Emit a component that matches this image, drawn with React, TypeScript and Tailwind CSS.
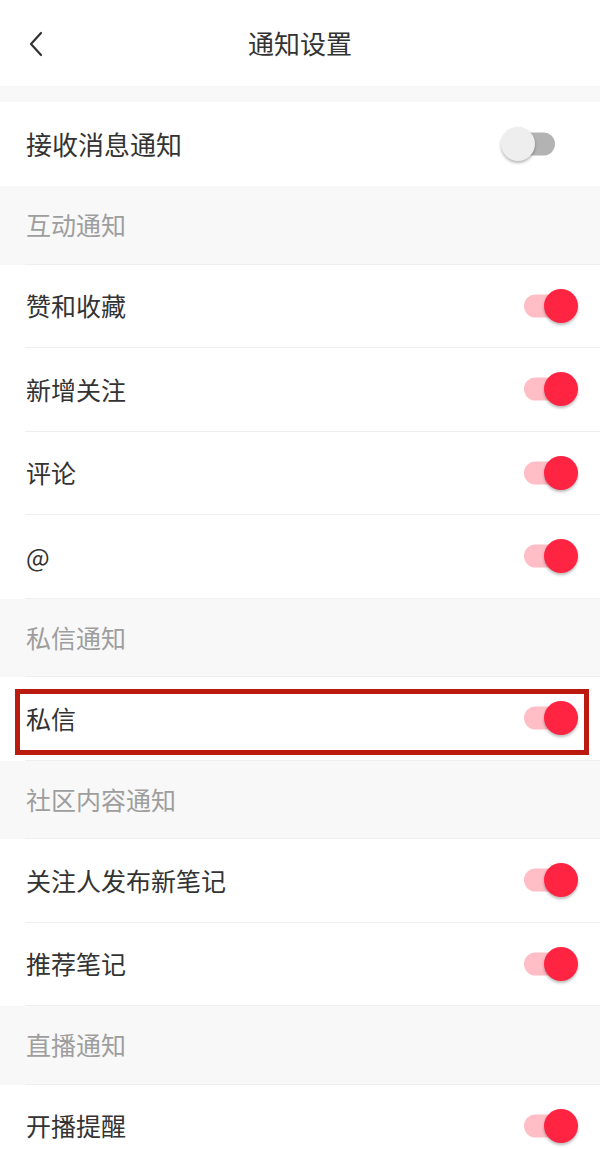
import { useState } from "react";

type Item =
  | { kind: "section"; label: string }
  | { kind: "row"; key: string; label: string; boxed?: boolean };

const ITEMS: Item[] = [
  { kind: "section", label: "互动通知" },
  { kind: "row", key: "like", label: "赞和收藏" },
  { kind: "row", key: "follow", label: "新增关注" },
  { kind: "row", key: "comment", label: "评论" },
  { kind: "row", key: "at", label: "@" },
  { kind: "section", label: "私信通知" },
  { kind: "row", key: "dm", label: "私信", boxed: true },
  { kind: "section", label: "社区内容通知" },
  { kind: "row", key: "notes", label: "关注人发布新笔记" },
  { kind: "row", key: "recommend", label: "推荐笔记" },
  { kind: "section", label: "直播通知" },
  { kind: "row", key: "live", label: "开播提醒" },
];

function Toggle({ on, onChange }: { on: boolean; onChange: () => void }) {
  return (
    <button
      type="button"
      onClick={onChange}
      className="relative h-[34px] w-[54px] shrink-0"
    >
      <span
        className={`absolute top-1/2 h-[23px] w-[51px] -translate-y-1/2 rounded-full ${
          on ? "left-0 bg-[#ffbdc6]" : "right-0 bg-[#b3b3b3]"
        }`}
      />
      <span
        className={`absolute top-0 h-[34px] w-[34px] rounded-full shadow-[0_2px_3px_rgba(0,0,0,0.28)] ${
          on ? "right-0 bg-[#ff2442]" : "left-0 bg-[#eeeeee]"
        }`}
      />
    </button>
  );
}

export default function App() {
  const [master, setMaster] = useState(false);
  const [flags, setFlags] = useState<Record<string, boolean>>({
    like: true,
    follow: true,
    comment: true,
    at: true,
    dm: true,
    notes: true,
    recommend: true,
    live: true,
  });

  const toggle = (key: string) =>
    setFlags((prev) => ({ ...prev, [key]: !prev[key] }));

  return (
    <div
      className="min-h-screen bg-white text-[#333333]"
      style={{ fontFamily: '"Noto Sans CJK SC", "Noto Sans", sans-serif' }}
    >
      {/* header */}
      <div className="relative flex h-[86px] items-center justify-center">
        <button type="button" className="absolute left-[28px] top-[31px]">
          <svg width="16" height="26" viewBox="0 0 16 26" fill="none">
            <path
              d="M13 2 L3 13 L13 24"
              stroke="#333333"
              strokeWidth="2.2"
              strokeLinecap="round"
              strokeLinejoin="round"
            />
          </svg>
        </button>
        <h1 className="text-[26px] leading-none">通知设置</h1>
      </div>

      <div className="h-[16px] bg-[#f8f8f8]" />

      <div className="flex h-[84px] items-center justify-between pl-[26px] pr-[45px]">
        <span className="text-[26px] leading-none">接收消息通知</span>
        <Toggle on={master} onChange={() => setMaster(!master)} />
      </div>

      {ITEMS.map((item, idx) =>
        item.kind === "section" ? (
          <div key={idx} className="bg-[#f8f8f8] pl-[25px]">
            <div className="flex h-[78.5px] items-center border-b border-[#efefef]">
              <span className="pl-px text-[25px] leading-none text-[#9e9e9e]">
                {item.label}
              </span>
            </div>
          </div>
        ) : (
          <div key={idx} className="relative bg-white pl-[25px]">
            <div className="flex h-[83.5px] items-center justify-between border-b border-[#efefef] pr-[22px]">
              <span className="pl-px text-[25px] leading-none">{item.label}</span>
              <Toggle on={flags[item.key]} onChange={() => toggle(item.key)} />
            </div>
            {item.boxed && (
              <div className="pointer-events-none absolute left-[15px] right-[11px] top-[12px] h-[66px] border-[5px] border-[#bb1a0e]" />
            )}
          </div>
        )
      )}
    </div>
  );
}
